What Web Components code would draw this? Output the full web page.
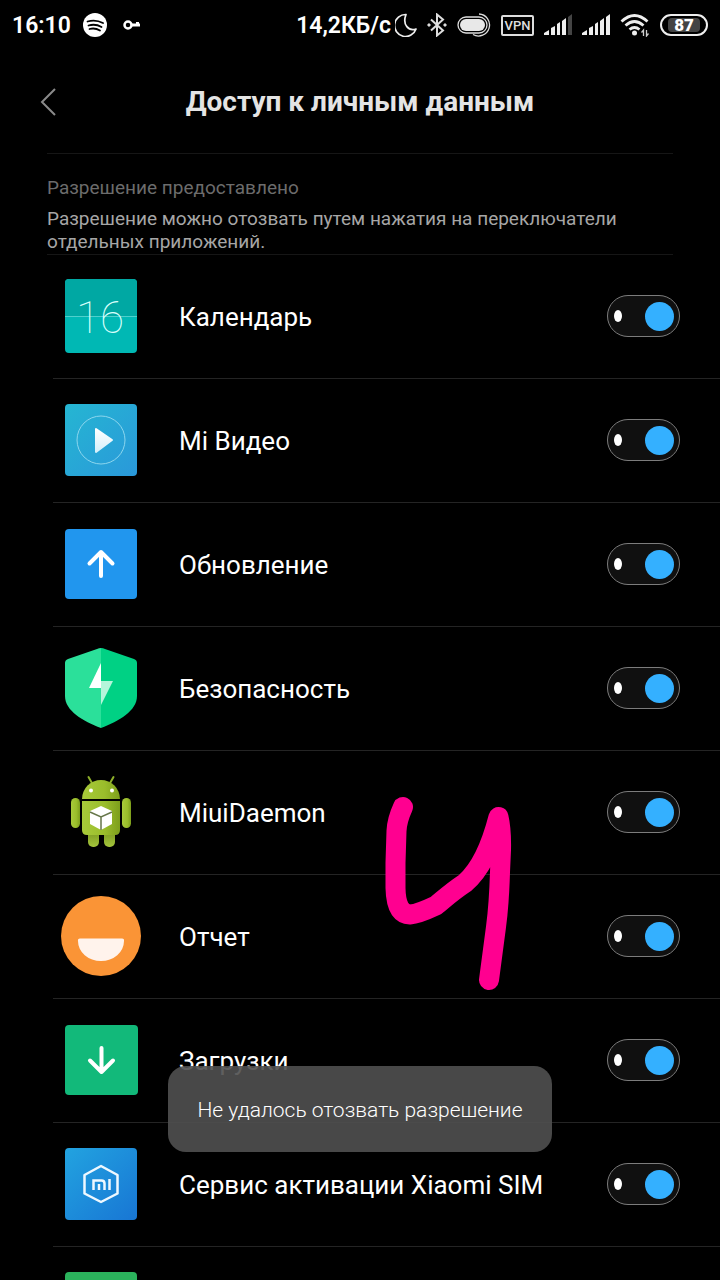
<!DOCTYPE html>
<html lang="ru">
<head>
<meta charset="utf-8">
<meta name="viewport" content="width=device-width, initial-scale=1">
<title>Доступ к личным данным</title>
<style>
html, body {
    margin: 0;
    height: 100%;
    background: #000;
}
body {
    font-family: Roboto, "Noto Sans", sans-serif;
    color: #fff;
}
</style>
</head>
<body>
<permission-screen>
    <status-bar slot="status" time="16:10" speed="14,2КБ/с" battery="87"></status-bar>
    <page-header slot="header">Доступ к личным данным</page-header>
    <section-note slot="note">
        <span slot="title">Разрешение предоставлено</span>
        Разрешение можно отозвать путем нажатия на переключатели отдельных приложений.
    </section-note>
    <app-row icon="calendar">Календарь</app-row>
    <app-row icon="video">Mi Видео</app-row>
    <app-row icon="update">Обновление</app-row>
    <app-row icon="security">Безопасность</app-row>
    <app-row icon="android">MiuiDaemon</app-row>
    <app-row icon="report">Отчет</app-row>
    <app-row icon="downloads">Загрузки</app-row>
    <app-row icon="sim">Сервис активации Xiaomi SIM</app-row>
    <app-row icon="green"></app-row>
    <ink-mark slot="overlay"></ink-mark>
    <toast-message slot="overlay">Не удалось отозвать разрешение</toast-message>
</permission-screen>

<script>
const APP_ICONS = {
    calendar: `
        <rect x="4" y="3" width="72" height="74" rx="4" fill="#00b8b4"/>
        <path d="M4 40V7a4 4 0 0 1 4-4h64a4 4 0 0 1 4 4v33z" fill="#00a8a3"/>
        <path d="M4 40.500h72" stroke="#4fd0cc"/>
        <text x="39" y="57" text-anchor="middle" font-size="44" font-weight="100" fill="#d8fffb">16</text>`,
    video: `
        <linearGradient id="g" x1="0" y1="0" x2="1" y2="1"><stop stop-color="#25b6d2"/><stop offset="1" stop-color="#2a98da"/></linearGradient>
        <linearGradient id="p" x1="0" y1="0" x2="0" y2="1"><stop stop-color="#fff"/><stop offset="1" stop-color="#d5effa"/></linearGradient>
        <rect x="4" y="4" width="72" height="72" rx="4" fill="url(#g)"/>
        <circle cx="40" cy="40" r="24" fill="none" stroke="#8cd6ee"/>
        <path d="M35 29l16 11-16 12z" fill="url(#p)" stroke="url(#p)" stroke-width="2" stroke-linejoin="round"/>`,
    update: `
        <rect x="4" y="5" width="72" height="70" rx="4" fill="#2196ee"/>
        <path d="M40 52V28M28.500 39.500L40 28l11.500 11.500" fill="none" stroke="#fff" stroke-width="4" stroke-linecap="round" stroke-linejoin="round"/>`,
    security: `
        <path d="M40 0q-2 0-4 1L7 11q-3 1-3 4v33c0 15 18 25 36 32z" fill="#2be09a"/>
        <path d="M40 0q2 0 4 1l29 10q3 1 3 4v33c0 15-18 25-36 32z" fill="#00d184"/>
        <path d="M40 15v25H28z" fill="#fff"/>
        <path d="M40 33h12L40 57z" fill="#b5f5da"/>`,
    android: `
        <linearGradient id="b" x1="0" y1="0" x2="1" y2="0"><stop stop-color="#a8ca3a"/><stop offset=".6" stop-color="#9abd2b"/><stop offset="1" stop-color="#7d9e1c"/></linearGradient>
        <linearGradient id="l" x1="0" y1="0" x2="0" y2="1"><stop stop-color="#6c8a17"/><stop offset="1" stop-color="#a5c53c"/></linearGradient>
        <path d="M27.500 5l4 7M52.500 5l-4 7" stroke="#8daf2a" stroke-width="2" stroke-linecap="round"/>
        <rect x="27" y="54" width="11" height="21" rx="5" fill="url(#l)"/>
        <rect x="43" y="54" width="11" height="21" rx="5" fill="url(#l)"/>
        <rect x="10" y="26" width="9" height="30" rx="4.500" fill="url(#b)"/>
        <rect x="61" y="26" width="9" height="30" rx="4.500" fill="url(#b)"/>
        <path d="M21 27a19 19 0 0 1 38 0z" fill="url(#b)"/>
        <path d="M21 29h38v29q0 5-5 5H26q-5 0-5-5z" fill="url(#b)"/>
        <circle cx="30" cy="18.500" r="2" fill="#fff"/>
        <circle cx="51" cy="18.500" r="2" fill="#fff"/>
        <path d="M40 34l11 5v13l-11 6-11-6V39z" fill="#fff"/>
        <path d="M29 40l11 5 11-5M40 45v13" fill="none" stroke="#66764a" stroke-width="1.500"/>`,
    report: `
        <circle cx="40" cy="40" r="40" fill="#fa9436"/>
        <path d="M19 42.500h42q2.500 0 2 2.500a23 20 0 0 1-46 0q-.5-2.500 2-2.500z" fill="#fff3ec"/>`,
    downloads: `
        <rect x="4" y="5" width="73" height="70" rx="4" fill="#12b97a"/>
        <path d="M40.500 28v24M29 40.500L40.500 52 52 40.500" fill="none" stroke="#fff" stroke-width="4" stroke-linecap="round" stroke-linejoin="round"/>`,
    sim: `
        <linearGradient id="s" x1="0" y1="0" x2="1" y2="1"><stop stop-color="#22a3e0"/><stop offset="1" stop-color="#1876d4"/></linearGradient>
        <rect x="4" y="4" width="72" height="72" rx="4" fill="url(#s)"/>
        <path d="M40 22l16.500 9v18.500L40 58l-16.500-8.500V31z" fill="none" stroke="#eef8ff" stroke-width="2.500" stroke-linejoin="round"/>
        <path d="M32.500 46V36.500h8q3 0 3 3V46M38 40v6M48.500 35v11" fill="none" stroke="#eef8ff" stroke-width="2.500"/>`,
    green: `
        <rect x="4" y="4" width="72" height="72" rx="4" fill="#2bb35c"/>`
};

class PermissionScreen extends HTMLElement {
    constructor() {
        super();
        this.attachShadow({ mode: "open" }).innerHTML = `<style>
:host {
    display: flex;
    flex-direction: column;
    position: relative;
    height: 100vh;
    overflow: hidden;
}
main {
    flex: 1;
    min-height: 0;
    overflow: hidden;
}
</style>
<slot name="status"></slot>
<slot name="header"></slot>
<main>
    <slot name="note"></slot>
    <slot></slot>
</main>
<slot name="overlay"></slot>`;
    }
}

class StatusBar extends HTMLElement {
    constructor() {
        super();
        this.attachShadow({ mode: "open" });
    }

    connectedCallback() {
        this.shadowRoot.innerHTML = `${this.styles()}
<span class="time">${this.getAttribute("time")}</span>
<svg class="spotify" width="24" height="24" viewBox="0 0 24 24">
    <circle cx="12" cy="12" r="12" fill="#fff"/>
    <path d="M4.500 8.500q8-2.500 15.500 1.500M5.500 12.500q7-2 13 1.500M6.500 16q5.500-1.500 10.500 1.500" fill="none" stroke="#000" stroke-width="1.800" stroke-linecap="round"/>
</svg>
<svg width="18" height="12" viewBox="0 0 18 12" fill="none" stroke="#fff">
    <circle cx="5" cy="6" r="3.500" stroke-width="2.500"/>
    <path d="M9 6h8M14.500 6V3" stroke-width="3"/>
</svg>
<span class="speed">${this.getAttribute("speed")}</span>
<svg class="moon" width="22" height="24" viewBox="0 0 22 24">
    <path d="M11 1.500A11 11 0 1 0 21 16C14 18.500 7 12 11 1.500z" fill="none" stroke="#eee" stroke-width="1.700" stroke-linejoin="round"/>
</svg>
<svg class="bt" width="20" height="24" viewBox="0 0 20 24">
    <path d="M4 6.500l12 11-6 5V1.500l6 5-12 11" fill="none" stroke="#ddd" stroke-width="2"/>
    <path d="M2 10l2 2-2 2-2-2zM18 10l2 2-2 2-2-2z" fill="#ddd"/>
</svg>
<svg class="pill" width="34" height="24" viewBox="0 0 34 24">
    <g fill="none" stroke="#ddd" stroke-width="1.300">
        <rect x="1" y="4" width="29" height="16" rx="8"/>
        <path d="M22 1a11 11 0 1 1-6 20.500"/>
    </g>
    <rect x="3" y="6" width="25" height="12" rx="6" fill="#e8e8e8"/>
</svg>
<span class="vpn">VPN</span>
${this.signal("#444")}
${this.signal("#eee")}
<svg class="wifi" width="30" height="24" viewBox="0 0 30 24">
    <g fill="none" stroke="#eee" stroke-width="2.800">
        <path d="M1.500 8.500q13-12 26 0M5.500 12.500q9-8 18 0M9.500 16.500q5-4 10 0"/>
    </g>
    <circle cx="14.500" cy="20" r="2.500" fill="#eee"/>
    <path d="M23.500 23v-6l-2 2.500M26.500 17v6l2-2.500" fill="none" stroke="#ccc" stroke-width="1.300"/>
</svg>
<span class="battery"><b>${this.getAttribute("battery")}</b></span>`;
    }

    signal(last) {
        return `<svg class="signal" width="28" height="24" viewBox="0 -1 28 24" fill="#eee">
    <path d="M0 21v-2l5-3v5zM7 21v-7l4-2v9zM13 21V10l3-2v13zM18 21V7l4-3v17z"/>
    <path d="M24 21V3l4-3v21z" fill="${last}"/>
</svg>`;
    }

    styles() {
        return `<style>
:host {
    display: flex;
    align-items: center;
    flex: none;
    height: 50px;
    padding: 0 12px;
    font-size: 23px;
    line-height: 28px;
    font-weight: 700;
}
svg {
    flex: none;
}
.time, .speed {
    padding-top: 2px;
    font-weight: 600;
}
.spotify {
    margin: 0 16px 0 12px;
}
.speed {
    margin-left: auto;
}
.moon {
    margin-left: 4px;
}
.bt {
    margin: 0 10px;
}
.vpn {
    box-sizing: border-box;
    width: 33px;
    height: 21px;
    margin: 0 10px;
    border: 2px solid #ddd;
    border-radius: 2px;
    font-size: 13px;
    line-height: 17px;
    font-weight: 500;
    text-align: center;
    color: #ddd;
}
.signal {
    margin-right: 10px;
}
.wifi {
    margin-right: 10px;
}
.battery {
    box-sizing: border-box;
    display: flex;
    width: 48px;
    height: 22px;
    padding: 2px 6px;
    border: 2px solid #eee;
    border-radius: 11px;
}
b {
    flex: 1;
    background: #444;
    border-radius: 4px;
    font-size: 17px;
    line-height: 14px;
    text-align: center;
}
</style>`;
    }
}

class PageHeader extends HTMLElement {
    constructor() {
        super();
        this.attachShadow({ mode: "open" }).innerHTML = `<style>
:host {
    display: grid;
    grid-template-columns: 64px 1fr 64px;
    align-items: center;
    flex: none;
    height: 103px;
}
button {
    display: flex;
    justify-content: flex-end;
    padding: 0 8px 0 0;
    border: 0;
    background: none;
}
h1 {
    margin: 0;
    font-size: 28px;
    line-height: 32px;
    font-weight: 700;
    text-align: center;
    color: #e4e4e4;
}
</style>
<button aria-label="Назад">
    <svg width="16" height="28" viewBox="0 0 16 28">
        <path d="M15 1L2 14l13 13" fill="none" stroke="#8a8a8a" stroke-width="2"/>
    </svg>
</button>
<h1><slot></slot></h1>`;
    }
}

class SectionNote extends HTMLElement {
    constructor() {
        super();
        this.attachShadow({ mode: "open" }).innerHTML = `<style>
:host {
    display: block;
    margin: 0 47px;
    padding: 22px 0 1px;
    border: solid #161616;
    border-width: 1px 0;
    font-size: 19px;
    line-height: 23px;
}
h2 {
    margin: 0 0 8px;
    font-size: 19px;
    font-weight: 400;
    color: #6c6c6c;
}
p {
    margin: 0;
    color: #a6a6a6;
}
</style>
<h2><slot name="title"></slot></h2>
<p><slot></slot></p>`;
    }
}

class AppRow extends HTMLElement {
    constructor() {
        super();
        this.attachShadow({ mode: "open" });
    }

    connectedCallback() {
        this.shadowRoot.innerHTML = `${this.styles()}
<svg width="80" height="80" viewBox="0 0 80 80" aria-hidden="true">${APP_ICONS[this.getAttribute("icon")] || ""}</svg>
<label for="allow"><slot></slot></label>
<input type="checkbox" role="switch" id="allow" checked>`;
    }

    styles() {
        return `<style>
:host {
    display: flex;
    align-items: center;
    margin-left: 53px;
    padding: 21px 40px 22px 8px;
    border-bottom: 1px solid #242424;
}
svg {
    flex: none;
}
label {
    flex: 1;
    margin-left: 38px;
    padding-top: 2px;
    font-size: 26px;
    line-height: 32px;
}
input {
    appearance: none;
    box-sizing: border-box;
    display: flex;
    flex: none;
    align-items: center;
    justify-content: space-between;
    width: 73px;
    height: 42px;
    margin: 0;
    padding: 0 5px 0 6px;
    border: 1px solid #7c7c7c;
    border-radius: 21px;
    background: #101010;
}
input::before {
    content: "";
    width: 8px;
    height: 12px;
    border-radius: 50%;
    background: #fff;
}
input::after {
    content: "";
    width: 29px;
    height: 29px;
    border-radius: 50%;
    background: #34b0ff;
}
input:not(:checked) {
    flex-direction: row-reverse;
}
input:not(:checked)::after {
    background: #666;
}
</style>`;
    }
}

// hand-drawn marker stroke on top of the list
class InkMark extends HTMLElement {
    constructor() {
        super();
        this.attachShadow({ mode: "open" }).innerHTML = `<style>
:host {
    position: absolute;
    left: 380px;
    top: 790px;
    pointer-events: none;
}
svg {
    display: block;
}
</style>
<svg width="140" height="210" viewBox="380 790 140 210" aria-hidden="true">
    <path d="M403 807Q397 820 396.500 831L395.500 863V888Q396 914 410 914.500Q418 914 436 905.500C443 900 450 893 465 883C480 870 490 850 498.500 817Q501.500 830 501 850L500 872Q499 905 496 927L489 980" fill="none" stroke="#ff0090" stroke-width="20" stroke-linecap="round" stroke-linejoin="round"/>
</svg>`;
    }
}

class ToastMessage extends HTMLElement {
    constructor() {
        super();
        this.attachShadow({ mode: "open" }).innerHTML = `<style>
:host {
    position: absolute;
    bottom: 128px;
    left: 0;
    right: 0;
    display: flex;
    justify-content: center;
}
div {
    padding: 30px 29px 28px;
    border-radius: 18px;
    background: rgba(79, 79, 79, .91);
    font-size: 21px;
    line-height: 28px;
    font-weight: 300;
}
</style>
<div role="status"><slot></slot></div>`;
    }
}

customElements.define("permission-screen", PermissionScreen);
customElements.define("status-bar", StatusBar);
customElements.define("page-header", PageHeader);
customElements.define("section-note", SectionNote);
customElements.define("app-row", AppRow);
customElements.define("ink-mark", InkMark);
customElements.define("toast-message", ToastMessage);
</script>
</body>
</html>
